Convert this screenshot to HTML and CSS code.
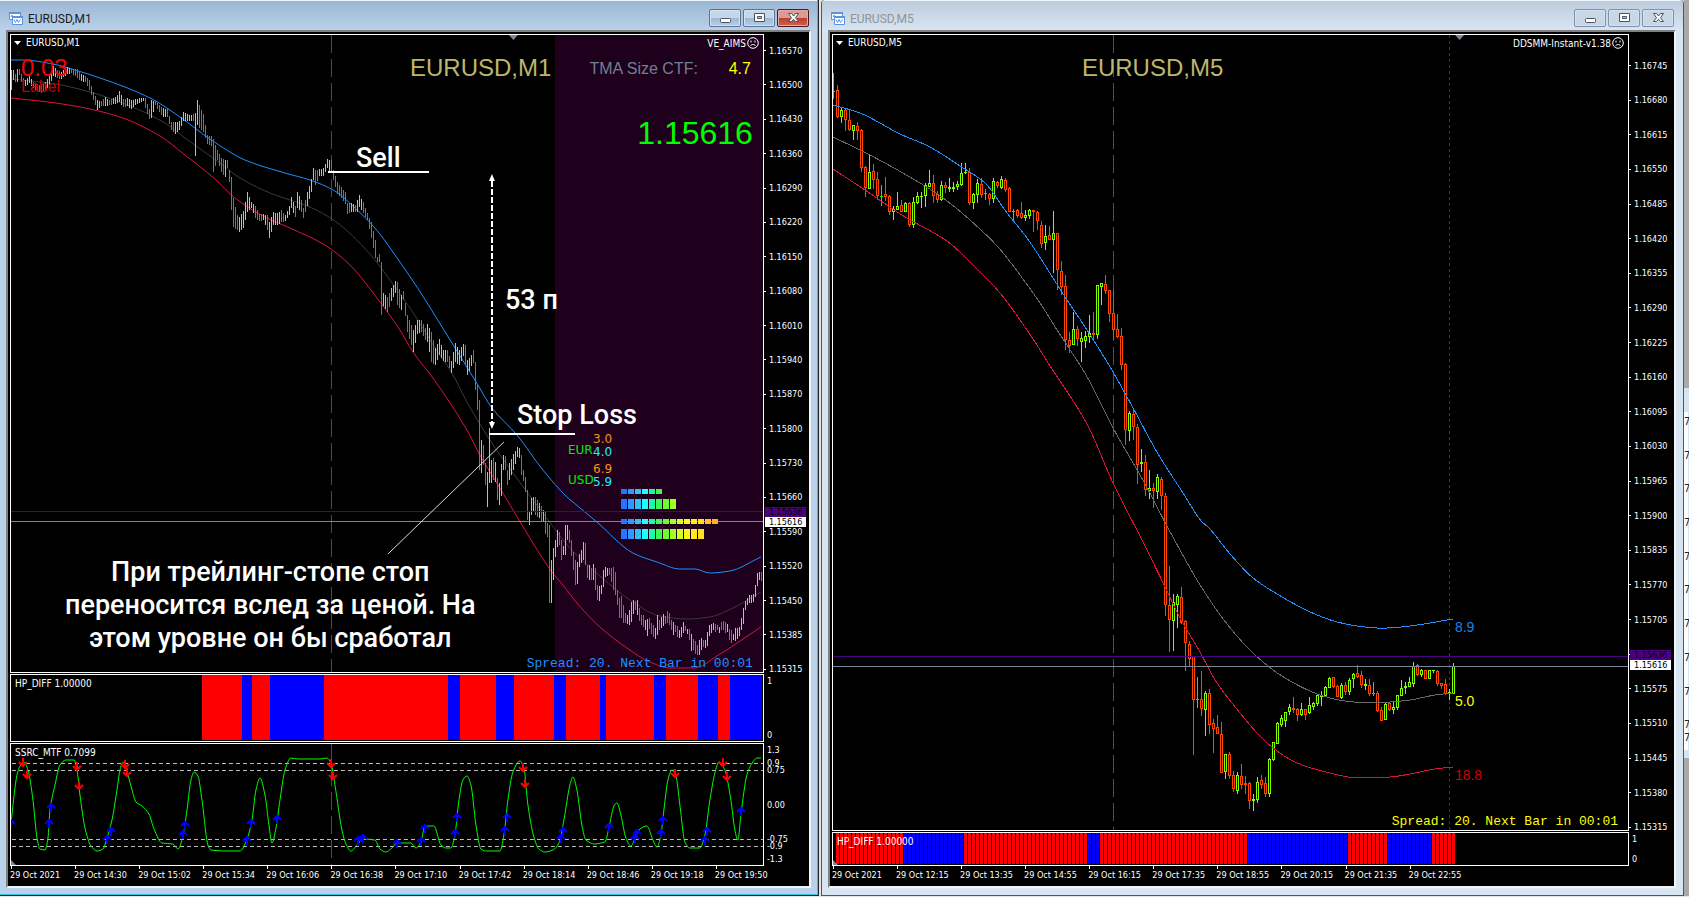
FILE: index.html
```html
<!doctype html>
<html lang="ru">
<head>
  <meta charset="UTF-8">
  <meta name="viewport" content="width=device-width, initial-scale=1.0">
  <title>EURUSD</title>
  <link rel="stylesheet" href="styles.css">
</head>
<body>
  <svg class="defs" aria-hidden="true">
    <symbol id="chart-icon" viewBox="0 0 14 14">
      <path d="M.5 1.5h11v7H.5z" fill="#fff" stroke="#5b93e0"/>
      <path d="M0 1h12v2H0z" fill="#5b93e0"/>
      <path d="M2 6l1-2 1 2 1-1" fill="none" stroke="#5b93e0"/>
      <path d="M3.5 5.5h10v8h-10z" fill="#fff" stroke="#5b93e0"/>
      <path d="M3 5h11v2H3z" fill="#5b93e0"/>
      <path d="M5 8.5l1.5 3L8 8.500l1.5 3 2-3" fill="none" stroke="#5b93e0"/>
    </symbol>
    <symbol id="min-icon" viewBox="0 0 14 10">
      <rect x="2.5" y="5.5" width="10" height="4" rx="1" fill="#fff" stroke="#4a5263"/>
    </symbol>
    <symbol id="max-icon" viewBox="0 0 14 10">
      <path d="M2.5.5h10v8h-10z" fill="#fff" stroke="#4a5263"/>
      <path d="M5.5 3.5h4v2h-4z" fill="#b6cbe4" stroke="#4a5263"/>
    </symbol>
    <symbol id="close-icon" viewBox="0 0 14 10">
      <path d="M2.5.5h3L7.5 3l2-2.5h3L9.5 4.800l3 3.700h-3l-2-2.300-2 2.300h-3l3-3.700z" fill="#fff" stroke="#4a5263"/>
    </symbol>
    <symbol id="sad-icon" viewBox="0 0 12 12">
      <circle cx="6" cy="6" r="5.300" fill="none" stroke="#fff"/>
      <path d="M4 3.5v2M8 3.5v2M3.5 9c1-2 4-2 5 0" fill="none" stroke="#fff"/>
    </symbol>
  </svg>

  <main class="desktop">
    <section class="window active">
      <header class="titlebar">
        <svg class="app-icon"><use href="#chart-icon"/></svg>
        <h1>EURUSD,M1</h1>
        <button class="win-btn" aria-label="Minimize"><svg><use href="#min-icon"/></svg></button>
        <button class="win-btn" aria-label="Maximize"><svg><use href="#max-icon"/></svg></button>
        <button class="win-btn close" aria-label="Close"><svg><use href="#close-icon"/></svg></button>
      </header>

      <div class="client">
        <div class="row main">
          <div class="plot">
            <svg id="m1-price" viewBox="11 35 752 637" preserveAspectRatio="none"></svg>
            <span class="symbol-name">EURUSD,M1</span>
            <span class="expert">VE_AIMS<svg><use href="#sad-icon"/></svg></span>
            <span class="big-symbol m1-symbol">EURUSD,M1</span>
            <span class="lot">0.03</span>
            <span class="lot-label">Label</span>
            <span class="tma">TMA Size CTF:</span>
            <span class="tma-value">4.7</span>
            <span class="price">1.15616</span>
            <span class="note sell">Sell</span>
            <span class="note pips">53 п</span>
            <span class="note stop">Stop Loss</span>
            <p class="note trailing">При трейлинг-стопе стоп<br>переносится вслед за ценой. На<br>этом уровне он бы сработал</p>
            <div class="strength eur"><b>EUR</b><i>3.0</i><em>4.0</em></div>
            <div class="strength usd"><b>USD</b><i>6.9</i><em>5.9</em></div>
            <span class="spread blue">Spread: 20. Next Bar in 00:01</span>
          </div>
          <div class="axis">
            <ul class="prices">
              <li>1.16570</li><li>1.16500</li><li>1.16430</li><li>1.16360</li><li>1.16290</li>
              <li>1.16220</li><li>1.16150</li><li>1.16080</li><li>1.16010</li><li>1.15940</li>
              <li>1.15870</li><li>1.15800</li><li>1.15730</li><li>1.15660</li><li>1.15590</li>
              <li>1.15520</li><li>1.15450</li><li>1.15385</li><li>1.15315</li>
            </ul>
            <div class="tags m1-tags"><span class="ask">1.15636</span><span class="bid">1.15616</span></div>
          </div>
        </div>

        <div class="row diff">
          <div class="plot">
            <svg id="m1-diff" viewBox="11 675 752 66" preserveAspectRatio="none"></svg>
            <span class="indicator">HP_DIFF 1.00000</span>
          </div>
          <div class="axis ends"><span>1</span><span>0</span></div>
        </div>

        <div class="row ssrc">
          <div class="plot">
            <svg id="m1-ssrc" viewBox="11 744 752 121" preserveAspectRatio="none"></svg>
            <span class="indicator">SSRC_MTF 0.7099</span>
          </div>
          <div class="axis levels">
            <span class="l1">1.3</span><span class="l2">0.9</span><span class="l3">0.75</span><span class="l4">0.00</span>
            <span class="l5">-0.75</span><span class="l6">-0.9</span><span class="l7">-1.3</span>
          </div>
        </div>

        <ol class="times m1-times">
          <li>29 Oct 2021</li><li>29 Oct 14:30</li><li>29 Oct 15:02</li><li>29 Oct 15:34</li>
          <li>29 Oct 16:06</li><li>29 Oct 16:38</li><li>29 Oct 17:10</li><li>29 Oct 17:42</li>
          <li>29 Oct 18:14</li><li>29 Oct 18:46</li><li>29 Oct 19:18</li><li>29 Oct 19:50</li>
        </ol>
      </div>
    </section>

    <section class="window inactive">
      <header class="titlebar">
        <svg class="app-icon"><use href="#chart-icon"/></svg>
        <h1>EURUSD,M5</h1>
        <button class="win-btn" aria-label="Minimize"><svg><use href="#min-icon"/></svg></button>
        <button class="win-btn" aria-label="Maximize"><svg><use href="#max-icon"/></svg></button>
        <button class="win-btn" aria-label="Close"><svg><use href="#close-icon"/></svg></button>
      </header>

      <div class="client">
        <div class="row main">
          <div class="plot">
            <svg id="m5-price" viewBox="833 35 795 795" preserveAspectRatio="none"></svg>
            <span class="symbol-name">EURUSD,M5</span>
            <span class="expert">DDSMM-Instant-v1.38<svg><use href="#sad-icon"/></svg></span>
            <span class="big-symbol m5-symbol">EURUSD,M5</span>
            <span class="band upper">8.9</span>
            <span class="band middle">5.0</span>
            <span class="band lower">18.8</span>
            <span class="spread yellow">Spread: 20. Next Bar in 00:01</span>
          </div>
          <div class="axis">
            <ul class="prices m5-prices">
              <li>1.16745</li><li>1.16680</li><li>1.16615</li><li>1.16550</li><li>1.16485</li>
              <li>1.16420</li><li>1.16355</li><li>1.16290</li><li>1.16225</li><li>1.16160</li>
              <li>1.16095</li><li>1.16030</li><li>1.15965</li><li>1.15900</li><li>1.15835</li>
              <li>1.15770</li><li>1.15705</li><li></li><li>1.15575</li><li>1.15510</li>
              <li>1.15445</li><li>1.15380</li><li>1.15315</li>
            </ul>
            <div class="tags m5-tags"><span class="ask">1.15636</span><span class="bid">1.15616</span></div>
          </div>
        </div>

        <div class="row diff-small">
          <div class="plot">
            <svg id="m5-diff" viewBox="833 833 795 32" preserveAspectRatio="none"></svg>
            <span class="indicator">HP_DIFF 1.00000</span>
          </div>
          <div class="axis ends"><span>1</span><span>0</span></div>
        </div>

        <ol class="times m5-times">
          <li>29 Oct 2021</li><li>29 Oct 12:15</li><li>29 Oct 13:35</li><li>29 Oct 14:55</li>
          <li>29 Oct 16:15</li><li>29 Oct 17:35</li><li>29 Oct 18:55</li><li>29 Oct 20:15</li>
          <li>29 Oct 21:35</li><li>29 Oct 22:55</li>
        </ol>
      </div>
    </section>

    <aside class="behind">
      <ol class="sheet">
        <li>7</li><li>7</li><li>7</li><li>7</li><li>7</li>
        <li>7</li><li>7</li><li>7</li><li>7</li><li>7</li><li class="total">7</li>
      </ol>
    </aside>
  </main>

  <script src="charts.js"></script>
</body>
</html>
```

FILE: styles.css
```css
* {
  box-sizing: border-box;
}

body {
  margin: 0;
  background: #e4e4e4;
  font-family: 'DejaVu Sans Condensed', 'DejaVu Sans', sans-serif;
  font-size: 9px;
  color: #fff;
}

ul, ol, p, h1 {
  margin: 0;
  padding: 0;
  list-style: none;
}

.defs {
  display: none;
}

.desktop {
  display: flex;
  height: 100vh;
  padding-bottom: 1px;
  overflow: hidden;
}

/* windows */
.window {
  display: flex;
  flex-direction: column;
  min-width: 0;
}

.active {
  flex: 819 1 0;
  margin-right: 2px;
  padding: 0 7px 7px 6px;
  border: solid #222;
  border-width: 0 1px 1px 0;
  background: linear-gradient(#9ab5d3, #b9d1ea 30px);
  box-shadow: inset -1px -1px #35c5dc, inset 0 1px #eef4fa;
}

.inactive {
  flex: 863 1 0;
  padding: 0 7px 7px 6px;
  border: solid #555;
  border-width: 0 1px 1px;
  border-radius: 4px 4px 0 0;
  background: linear-gradient(#bccbdb, #d7e4f2 30px);
  box-shadow: inset 0 1px #eef4fa;
}

.titlebar {
  display: flex;
  flex: 0 0 30px;
  align-items: center;
  gap: 2px;
  padding: 6px 2px 0 3px;
}

.titlebar h1 {
  flex: 1;
  padding: 1px 0 0 3px;
  font: 12px Roboto, sans-serif;
  color: #1b1b1b;
}

.inactive h1 {
  color: #8f9499;
}

.app-icon {
  width: 14px;
  height: 14px;
}

.win-btn {
  display: flex;
  align-items: center;
  justify-content: center;
  width: 32px;
  height: 18px;
  padding: 0;
  border: 1px solid #5d7391;
  border-radius: 2px;
  background: linear-gradient(#c6d7e9 50%, #9db7d3 50%, #b6cee8);
  box-shadow: inset 0 0 0 1px #d3e1f0;
}

.win-btn svg {
  width: 14px;
  height: 10px;
}

.inactive .win-btn {
  border-color: #8292ae;
  background: #c9d6e4;
}

.active .close {
  border-color: #4d1620;
  background: linear-gradient(#dc9a90 50%, #b8402c 50%, #cc6450);
  box-shadow: inset 0 0 0 1px #e3aca4;
}

.client {
  display: flex;
  flex: 1;
  flex-direction: column;
  gap: 1px;
  min-height: 0;
  padding: 2px 0 0 2px;
  border: 2px solid;
  border-color: #808080 #f4f4f4 #f4f4f4 #808080;
  background: #000;
}

/* panes */
.row {
  display: flex;
  flex: none;
}

.main {
  flex: 1;
  min-height: 0;
}

.diff {
  height: 68px;
}

.ssrc {
  height: 123px;
}

.diff-small {
  height: 34px;
}

.plot {
  position: relative;
  flex: 1;
  min-width: 0;
  border: 1px solid #fff;
}

.plot > svg {
  display: block;
  width: 100%;
  height: 100%;
}

.plot > span, .plot > p, .strength {
  position: absolute;
  white-space: nowrap;
}

.axis {
  position: relative;
  flex: 0 0 45px;
}

.prices {
  display: flex;
  flex-direction: column;
  justify-content: space-between;
  height: 100%;
  padding-top: 12px;
}

.m5-prices {
  padding-top: 27px;
}

.prices li {
  display: flex;
  align-items: center;
  gap: 3px;
  height: 8px;
  padding-top: 1px;
}

.prices li::before {
  content: '';
  width: 2px;
  height: 1px;
  background: #fff;
}

.tags {
  position: absolute;
  left: 1px;
  width: 41px;
  line-height: 10px;
}

.m1-tags {
  top: 74%;
}

.m5-tags {
  top: 77.3%;
}

.tags span {
  display: block;
  padding-left: 4px;
  color: #000;
}

.ask {
  background: #4b0082;
}

.bid {
  background: #fff;
}

.ends {
  display: flex;
  flex-direction: column;
  justify-content: space-between;
  padding: 2px 3px;
}

.levels span {
  position: absolute;
  left: 3px;
  line-height: 10px;
}

.l1 { top: 2%; }
.l2 { top: 12%; }
.l3 { top: 18%; }
.l4 { top: 46%; }
.l5 { top: 74%; }
.l6 { top: 80%; }
.l7 { top: 90%; }

.times {
  display: flex;
  flex: 0 0 20px;
  margin: -1px 45px 0 0;
  white-space: nowrap;
}

.times li {
  line-height: 12px;
}

.times li::before {
  content: '';
  display: block;
  width: 1px;
  height: 3px;
  margin-left: 1px;
  background: #fff;
}

.m1-times li {
  flex: 0 0 8.5%;
}

.m5-times li {
  flex: 0 0 8.04%;
}

/* labels on the charts */
.symbol-name, .expert, .indicator {
  font-size: 10px;
}

.symbol-name {
  top: 2px;
  left: 15px;
}

.expert {
  display: flex;
  align-items: center;
  gap: 1px;
  top: 2px;
  right: 4px;
}

.expert svg {
  width: 12px;
  height: 12px;
}

.indicator {
  top: 3px;
  left: 4px;
}

.big-symbol, .lot, .lot-label, .tma, .tma-value, .price, .band {
  font-family: 'Liberation Sans', Arial, sans-serif;
}

.big-symbol, .lot {
  top: 19px;
  font-size: 24px;
}

.big-symbol {
  color: #bdb76b;
}

.m1-symbol {
  left: 399px;
}

.m5-symbol {
  left: 249px;
}

.lot {
  left: 10px;
  color: #f00;
}

.lot-label {
  top: 43px;
  left: 10px;
  font-size: 16px;
  color: #c00000;
}

.tma {
  top: 25px;
  right: 65px;
  font-size: 16px;
  color: #708090;
}

.tma-value {
  top: 25px;
  right: 12px;
  font-size: 16px;
  color: #ff0;
}

.price {
  top: 80px;
  right: 10px;
  font-size: 32px;
  color: #0f0;
}

.note {
  font-family: Roboto, sans-serif;
  font-size: 27px;
  font-weight: 500;
  line-height: 33px;
}

.sell {
  top: 107px;
  left: 345px;
}

.pips {
  top: 249px;
  left: 494px;
}

.stop {
  top: 364px;
  left: 506px;
}

.trailing {
  top: 521px;
  left: 54px;
  text-align: center;
}

.strength {
  left: 557px;
  width: 44px;
  height: 26px;
  font: 12px 'DejaVu Sans', sans-serif;
}

.eur {
  top: 397px;
}

.usd {
  top: 427px;
}

.strength > * {
  position: absolute;
  font-style: normal;
  font-weight: normal;
}

.strength b {
  top: 11px;
  left: 0;
  color: #0e0;
}

.strength i {
  top: 0;
  left: 25px;
  color: #f7931e;
}

.strength em {
  top: 13px;
  left: 25px;
  color: #1ef0f8;
}

.spread {
  right: 10px;
  bottom: 1px;
  font: 13px 'Liberation Mono', monospace;
}

.blue {
  color: #1e90ff;
}

.yellow {
  color: #ff0;
}

.band {
  left: 622px;
  font-size: 14px;
}

.upper {
  top: 584px;
  color: #1e80f0;
}

.middle {
  top: 658px;
  color: #ff0;
}

.lower {
  top: 732px;
  color: #d00000;
}

/* what shows to the right of the windows */
.behind {
  flex: 0 0 5px;
  padding-top: 388px;
  background: #a9a9a9;
  overflow: hidden;
}

.sheet {
  display: flex;
  flex-direction: column;
  justify-content: space-between;
  height: 370px;
  padding-top: 5px;
  border: solid #d7e4f2;
  border-width: 24px 1px 8px 0;
  background: #fff;
  font-size: 11px;
  line-height: 10px;
  color: #222;
}

.sheet .total {
  margin: -21px 0 7px;
}
```

FILE: charts.js
```js
const UP = '#7fff00';
const DOWN = '#ff4500';
const BLUE = '#1e90ff';
const CRIMSON = '#dc143c';

function add(svg, name, attrs) {
  const el = document.createElementNS('http://www.w3.org/2000/svg', name);
  for (const key in attrs) el.setAttribute(key, attrs[key]);
  svg.appendChild(el);
}

function line(svg, points, color, attrs) {
  add(svg, 'polyline', Object.assign({
    points: points, fill: 'none', stroke: color, 'shape-rendering': 'crispEdges'
  }, attrs));
}

// monotone cubic through the points, so flat tops stay flat
function curve(svg, points, color) {
  const p = points.split(' ').map(s => s.split(',').map(Number));
  const slopes = p.slice(1).map((b, i) => (b[1] - p[i][1]) / (b[0] - p[i][0]));
  const tangents = p.map((_, i) => {
    if (i === 0) return slopes[0];
    if (i === p.length - 1) return slopes[i - 1];
    const a = slopes[i - 1];
    const b = slopes[i];
    return a * b <= 0 ? 0 : 2 * a * b / (a + b);
  });
  let d = `M${p[0]}`;
  for (let i = 1; i < p.length; i++) {
    const dx = (p[i][0] - p[i - 1][0]) / 3;
    d += `C${p[i - 1][0] + dx} ${p[i - 1][1] + tangents[i - 1] * dx}`
      + ` ${p[i][0] - dx} ${p[i][1] - tangents[i] * dx} ${p[i][0]} ${p[i][1]}`;
  }
  add(svg, 'path', { d: d, fill: 'none', stroke: color, 'shape-rendering': 'crispEdges' });
}

function rect(svg, x, y, w, h, color) {
  add(svg, 'rect', { x: x, y: y, width: w, height: h, fill: color, 'shape-rendering': 'crispEdges' });
}

// ---- M1 price ----
// x, high, low, direction; bars in between are interpolated every 2px
const m1Bars = `11 70 90 u,13 70 80 u,15 74 82 d,17 69 82 u,19 69 75 d,21 74 82 d,23 78 86 d,25 80 86 u,29 76 83 u,33 82 88 d,37 84 91 d,
41 86 93 d,45 82 90 u,49 76 85 u,53 66 76 u,57 70 78 d,61 72 79 u,67 67 74 u,71 69 73 d,77 69 78 d,81 74 81 u,85 76 82 d,89 80 90 d,
93 92 100 d,97 100 110 u,101 101 106 d,105 97 106 u,109 100 105 d,113 98 104 u,117 95 103 u,119 91 102 u,123 99 107 d,127 98 106 u,
131 100 109 u,135 99 105 u,139 98 103 u,143 98 101 u,145 98 108 d,149 109 119 d,151 100 118 u,155 101 105 d,159 105 112 d,163 108 117 u,
167 109 117 d,171 122 130 d,175 122 134 u,179 121 130 u,183 112 121 u,187 114 121 u,191 115 121 u,193 114 121 d,195 113 156 u,197 100 125 u,
199 105 128 d,203 114 132 d,207 135 144 d,211 136 146 d,213 139 172 d,217 150 160 d,221 158 172 d,225 160 177 u,227 160 168 d,
229 170 182 d,231 177 210 d,233 198 227 d,237 215 230 d,239 217 232 u,243 211 228 u,247 192 212 u,251 202 208 u,255 206 218 d,259 214 221 d,
263 214 220 u,267 215 230 d,269 222 238 u,273 212 225 u,277 213 225 u,281 210 222 d,285 215 221 u,289 206 215 u,291 197 208 u,
295 206 217 d,297 192 208 u,301 200 212 d,303 208 218 d,307 192 206 u,311 179 192 u,313 168 180 u,315 170 185 d,319 169 176 u,
323 168 176 u,327 159 168 u,331 160 173 d,333 170 180 d,337 182 194 d,341 187 198 d,345 192 204 d,347 203 214 d,351 203 212 u,
355 205 212 d,357 200 212 u,359 195 207 u,363 202 213 d,367 213 220 d,371 222 238 d,375 240 258 d,377 257 262 d,379 254 262 d,381 262 315 d,
383 293 306 u,387 297 312 d,391 288 301 u,395 281 293 u,397 282 305 d,401 295 310 u,403 291 300 d,407 315 332 d,411 325 345 d,
413 330 352 u,417 320 334 u,421 320 332 d,425 328 340 d,427 324 342 u,431 332 362 d,435 348 365 u,439 339 355 u,443 350 361 u,
447 350 362 d,451 361 373 u,455 343 362 u,459 350 365 u,463 344 356 u,465 345 365 d,467 360 375 u,471 355 366 u,473 350 363 d,
475 362 390 d,477 385 410 d,479 400 470 d,481 440 473 u,483 445 465 d,485 463 485 d,487 472 507 u,489 428 483 u,491 460 483 u,
493 458 480 d,495 462 482 u,497 478 500 d,499 483 505 u,501 464 496 u,503 455 470 u,505 456 470 d,507 470 485 d,509 463 480 u,
513 454 470 u,517 447 457 u,519 448 458 u,521 455 475 d,523 470 481 d,525 477 492 d,527 490 520 d,529 512 525 u,531 498 515 u,
533 497 512 u,535 497 515 d,539 503 518 u,541 506 521 d,543 510 522 u,545 511 534 d,547 523 537 d,549 525 603 d,551 560 603 u,
553 548 580 u,555 540 557 u,557 530 547 u,559 532 545 d,561 540 560 d,563 546 555 u,565 525 555 u,567 525 540 u,569 530 543 d,
571 540 556 d,573 552 570 d,575 560 585 d,577 562 584 u,579 554 567 u,581 550 563 u,583 542 560 u,585 543 565 d,587 565 578 d,
589 565 580 u,591 568 580 d,593 564 580 u,595 568 590 d,597 585 600 d,599 586 601 u,601 585 594 u,603 570 587 u,605 567 577 u,
609 568 575 d,611 568 582 d,613 567 590 d,615 572 595 d,617 590 605 d,619 598 618 d,621 596 618 d,623 605 623 d,625 613 623 d,
627 615 624 u,629 610 625 u,631 602 622 u,633 600 614 u,635 601 610 d,637 600 615 u,639 608 621 d,641 615 625 d,643 615 627 d,
645 620 630 u,647 619 636 u,649 618 629 d,651 623 634 d,653 625 637 d,655 628 639 u,657 615 635 u,659 620 630 d,661 617 628 u,
663 614 626 u,665 616 624 d,667 611 623 d,669 613 625 d,671 620 630 d,673 622 635 u,675 625 632 d,677 626 637 d,679 630 638 u,
681 627 637 u,683 622 633 u,685 626 631 d,687 629 634 u,689 629 640 d,691 634 651 u,693 639 650 d,695 641 654 d,697 645 655 d,
699 640 655 u,701 638 650 u,703 640 647 d,705 640 648 u,707 632 646 u,709 625 636 u,713 623 630 u,715 624 632 d,717 625 630 d,
719 627 633 u,721 622 630 d,723 621 630 d,725 622 633 d,727 624 632 u,729 629 640 d,731 630 643 d,733 634 640 u,735 628 641 u,
739 627 636 u,741 618 630 u,743 608 624 u,745 601 610 u,747 598 605 u,749 595 603 u,753 594 602 u,755 585 597 u,757 573 586 u,
759 572 580 u,761 572 581 d`.split(',').map(s => s.trim().split(' '));

const m1 = document.getElementById('m1-price');

rect(m1, 555, 35, 208, 637, '#1e001c');
curve(m1, '11,60 23,60 53,64 75,70 100,78 125,87 152,99 180,117 210,139 245,160 285,173 310,180 335,191 355,208 375,228 400,262 419,290 444,330 478,385 492,408 517,435 543,470 567,497 573,502 597,522 633,553 657,562 680,569 695,569 710,573 730,571 761,557', BLUE);
curve(m1, '11,79 50,83 90,92 130,106 165,123 185,138 220,163 240,178 270,193 310,207 335,221 370,254 395,287 420,323 432,343 452,373 467,402 490,440 513,473 543,513 570,548 600,576 633,602 660,616 687,619 710,617 733,608 761,592', '#3a3a3a');
curve(m1, '11,98 40,101 75,106 120,117 160,136 185,155 215,179 235,198 265,217 290,228 325,245 350,265 380,302 400,330 413,352 433,378 467,430 480,455 500,488 533,543 552,572 563,585 577,603 600,627 627,648 650,662 670,668 695,668 717,656 761,627', CRIMSON);
line(m1, '331.5,35 331.5,672', '#e01010', { 'stroke-dasharray': '18 6' });

m1Bars.forEach((bar, i) => {
  const [x, high, low] = bar.slice(0, 3).map(Number);
  const next = m1Bars[i + 1];
  const end = next ? Number(next[0]) : x + 2;
  for (let px = x; px < end; px += 2) {
    const t = next ? (px - x) / (end - x) : 0;
    const y1 = Math.round(high + t * ((next ? next[1] : high) - high));
    const y2 = Math.round(low + t * ((next ? next[2] : low) - low));
    rect(m1, px, y1, 1, y2 - y1, bar[3] === 'u' ? UP : DOWN);
  }
});

rect(m1, 11, 511, 752, 1, '#4b0082');
rect(m1, 11, 521, 752, 1, '#778899');

// currency strength blocks
const heat = ['#2874ff', '#3098ff', '#30c0f8', '#20fffc', '#20f8a8', '#40f850', '#68ff28',
  '#a8ff28', '#d0ff28', '#f8f820', '#ffe820', '#ffe020', '#ffc030', '#ffb020'];
[[489, 5, 6], [499, 10, 8], [519, 5, 14], [529, 10, 12]].forEach(([y, h, count]) => {
  for (let i = 0; i < count; i++) rect(m1, 621 + i * 7, y, 6, h, heat[i]);
});

// trade markup
rect(m1, 328, 171, 101, 2, '#fff');
rect(m1, 489, 433, 86, 2, '#fff');
line(m1, '504,442 388,554', '#ddd', { 'shape-rendering': 'auto' });
line(m1, '492,181 492,424', '#fff', { 'stroke-width': 2, 'stroke-dasharray': '6 2' });
add(m1, 'path', { d: 'M492 174l3 7h-6zM492 429l3-7h-6z', fill: '#fff' });
add(m1, 'path', { d: 'M509 35h9l-4.5 5z', fill: '#778899' });
add(m1, 'path', { d: 'M14 41h7l-3.5 4z', fill: '#fff' });

// ---- M1 HP_DIFF ----
const m1Diff = document.getElementById('m1-diff');
[202, 242, 252, 270, 324, 448, 460, 496, 514, 554, 566, 600, 606, 654, 666, 698, 718, 730, 762]
  .forEach((x, i, edges) => {
    if (i + 1 < edges.length) rect(m1Diff, x, 675, edges[i + 1] - x, 65, i % 2 ? '#00f' : '#f00');
  });

// ---- M1 SSRC ----
const ssrc = document.getElementById('m1-ssrc');
[763, 770, 839, 846].forEach(y => {
  line(ssrc, `12,${y}.5 763,${y}.5`, '#c0c0c0', { 'stroke-dasharray': '4 3' });
});
line(ssrc, '331.5,744 331.5,865', '#e01010', { 'stroke-dasharray': '18 6' });
curve(ssrc, '11,823 17,775 20,766 24,762 28,770 33,800 37,838 40,849 45,850 48,838 50,810 55,785 60,765 66,760 74,760 77,770 80,795 85,828 91,846 97,851 103,849 107,838 112,820 117,790 120,770 123,762 127,772 131,786 136,802 142,806 149,814 154,829 162,843 173,844 178,849 183,836 187,810 191,780 194,772 198,776 202,800 208,845 211,850 225,851 240,851 246,842 252,820 256,790 260,778 265,795 269,825 272,843 276,828 280,800 285,770 291,758 298,759 320,759 327,758 331,763 335,785 342,830 346,844 351,851 357,845 363,839 375,840 380,849 386,852 392,848 397,843 411,843 416,848 421,842 425,826 434,826 441,845 446,848 451,848 455,835 459,800 463,780 467,776 471,785 476,825 481,849 486,851 500,851 504,835 508,800 513,772 520,761 524,768 528,805 534,837 539,849 545,852 553,850 559,843 564,820 570,785 573,777 577,790 582,825 586,840 595,844 601,843 605,842 610,823 614,806 617,803 621,815 626,838 631,846 636,836 640,829 647,826 653,840 657,847 661,835 664,810 668,780 672,770 676,776 680,805 685,842 690,848 700,848 705,835 710,800 715,773 719,762 725,770 731,800 735,830 738,840 741,815 747,775 753,762 757,758 761,758', '#0f0');

const sells = [[23, 762], [27, 774], [77, 766], [79, 785], [125, 764], [127, 772], [331, 763], [333, 775],
  [523, 767], [525, 783], [675, 773], [723, 762], [727, 776]];
const buys = [[11, 823], [49, 823], [51, 807], [107, 839], [111, 831], [183, 834], [185, 825], [247, 840],
  [251, 823], [277, 819], [358, 840], [363, 838], [397, 843], [421, 841], [425, 828], [455, 833], [457, 817],
  [505, 830], [507, 817], [561, 838], [563, 831], [609, 827], [635, 838], [637, 833], [661, 833], [663, 820],
  [705, 840], [707, 831], [741, 811]];
sells.forEach(([x, y]) => add(ssrc, 'path', {
  d: `M${x} ${y - 4}v8M${x - 4} ${y}l4 4 4-4`, fill: 'none', stroke: '#f00', 'stroke-width': 2
}));
buys.forEach(([x, y]) => add(ssrc, 'path', {
  d: `M${x} ${y + 5}v-8M${x - 4} ${y + 1}l4-4 4 4`, fill: 'none', stroke: '#00f', 'stroke-width': 2
}));
add(ssrc, 'path', { d: 'M11 860l5 5h-5z', fill: '#778899' });

// ---- M5 price ----
// high, low, body top, body bottom, direction (x = doji)
const m5Bars = `73 99 91 92 x,85 118 90 117 d,108 123 110 117 u,109 131 110 120 d,110 131 120 130 d,125 140 125 131 u,122 140 126 131 d,
129 172 130 168 d,166 197 167 188 d,155 189 172 189 u,164 189 171 180 d,172 200 179 196 d,185 206 196 197 x,177 201 194 197 d,
195 215 196 212 d,206 220 209 212 u,192 210 206 210 u,200 212 205 212 d,202 212 203 212 u,202 227 203 225 d,197 228 202 225 u,
192 204 196 203 u,192 208 196 197 u,183 207 185 196 u,170 187 183 187 u,175 203 183 196 d,191 203 194 200 d,181 201 185 200 u,
182 193 185 188 d,178 192 187 189 u,182 192 187 189 u,181 190 184 187 u,163 186 173 185 u,163 174 172 173 u,168 205 172 203 d,
193 209 194 203 u,179 203 183 195 u,178 198 184 195 d,189 200 193 194 x,193 205 194 199 d,178 203 181 199 u,181 188 182 186 d,
176 189 179 188 u,178 192 180 190 d,187 212 188 212 d,209 222 211 212 x,209 218 210 216 d,202 219 213 218 d,210 221 215 218 u,
209 219 210 216 u,210 232 210 212 d,211 230 212 221 d,221 248 225 244 d,225 250 236 243 u,226 240 235 240 d,211 273 233 240 u,
233 290 233 270 d,261 295 271 287 d,275 350 286 340 d,332 353 340 346 d,312 345 329 345 u,326 346 329 339 d,332 362 338 342 u,
331 348 336 341 u,315 343 333 337 u,312 339 333 335 d,285 339 285 335 u,283 305 283 287 u,275 294 284 291 d,290 322 290 314 d,
290 340 313 330 d,314 338 329 337 d,328 370 336 365 d,363 445 364 430 d,411 441 413 431 u,408 440 414 427 d,424 484 427 465 d,
449 472 462 464 u,455 496 462 490 d,470 499 488 491 u,483 508 488 491 d,474 499 477 492 u,477 510 479 496 d,493 616 496 605 d,
566 652 605 620 d,594 651 602 621 u,594 628 596 605 u,587 624 597 623 d,620 671 621 643 d,641 667 644 659 d,656 755 656 700 d,
677 708 699 700 x,671 716 699 709 d,691 736 693 710 u,689 734 693 725 d,719 753 723 729 d,715 734 727 734 d,722 773 734 773 d,
754 779 754 772 u,752 779 754 776 d,771 792 775 789 d,772 794 775 791 u,764 789 776 785 d,776 794 783 785 d,782 809 783 801 d,
794 811 799 801 u,777 803 782 800 u,775 789 780 785 d,777 797 783 794 d,758 797 759 794 u,742 761 742 760 u,722 744 723 744 u,
715 727 718 725 u,712 727 712 721 u,704 715 707 712 u,697 713 708 710 d,708 721 709 715 d,703 716 709 715 u,709 720 709 715 d,
697 714 705 713 u,702 710 703 707 u,694 706 695 704 u,691 706 695 697 u,686 696 687 696 u,677 688 678 688 u,677 688 677 687 d,
685 697 686 697 d,683 699 685 698 u,682 695 685 692 d,678 695 680 692 u,673 688 674 679 u,665 678 673 677 d,671 688 675 685 d,
679 690 684 686 u,679 696 685 694 d,682 696 693 694 x,691 712 693 711 d,707 721 710 721 d,703 720 704 720 u,703 711 703 710 d,
701 714 707 710 u,695 710 695 708 u,680 696 688 696 u,682 694 686 688 u,677 687 682 687 u,662 687 666 684 u,664 676 665 675 d,
669 677 670 675 u,670 679 670 679 d,670 679 670 679 u,670 673 670 671 u,670 686 671 684 d,683 689 683 686 d,679 695 684 694 d,
689 700 692 694 u,663 694 666 694 u`.split(',').map(s => s.trim().split(' '));

const m5 = document.getElementById('m5-price');

line(m5, '1113.5,35 1113.5,830', '#e01010', { 'stroke-dasharray': '18 6' });
line(m5, '1449.5,35 1449.5,830', '#3c3c14', { 'stroke-dasharray': '3 3' });

m5Bars.forEach(([high, low, top, bottom, dir], i) => {
  const x = 833 + i * 4;
  const color = { u: UP, d: DOWN, x: '#00ff00' }[dir];
  const h = Math.max(1, bottom - top);
  rect(m5, x, high, 1, low - high, color);
  rect(m5, x - 1, top, 3, h, color);
  if (h > 2) rect(m5, x, Number(top) + 1, 1, h - 2, '#000');
});

curve(m5, '833,105 860,113 900,134 928,146 960,166 985,183 1007,213 1027,238 1053,278 1067,300 1087,330 1113,372 1133,408 1158,454 1183,493 1202,522 1208,527 1230,554 1253,578 1277,594 1310,612 1337,622 1357,626 1377,628 1387,628 1410,626 1453,619', BLUE);
curve(m5, '833,137 870,155 920,183 943,198 970,220 998,247 1020,275 1040,303 1057,330 1086,375 1113,428 1145,484 1168,528 1200,585 1227,624 1256,656 1285,678 1320,695 1345,701 1370,703 1390,702 1410,700 1435,695 1453,693', '#696969');
curve(m5, '833,169 865,190 905,217 947,241 970,262 1000,293 1033,339 1050,366 1087,424 1113,483 1145,546 1165,587 1180,618 1200,652 1215,680 1240,713 1267,743 1297,763 1330,773 1357,778 1390,777 1410,774 1435,769 1453,767', CRIMSON);
rect(m5, 833, 656, 795, 1, '#4b0082');
rect(m5, 833, 666, 795, 1, '#778899');
add(m5, 'path', { d: 'M1455 35h9l-4.5 5z', fill: '#778899' });
add(m5, 'path', { d: 'M836 41h7l-3.5 4z', fill: '#fff' });

// ---- M5 HP_DIFF ----
const m5Diff = document.getElementById('m5-diff');
[833, 904, 964, 1088, 1100, 1248, 1348, 1388, 1432, 1455].forEach((x, i, edges) => {
  for (let px = 832 + Math.ceil((x - 832) / 4) * 4; px < edges[i + 1]; px += 4) {
    rect(m5Diff, px, 833, 3, 31, i % 2 ? '#00f' : '#f00');
  }
});
add(m5Diff, 'path', { d: 'M833 860l5 5h-5z', fill: '#778899' });
```
